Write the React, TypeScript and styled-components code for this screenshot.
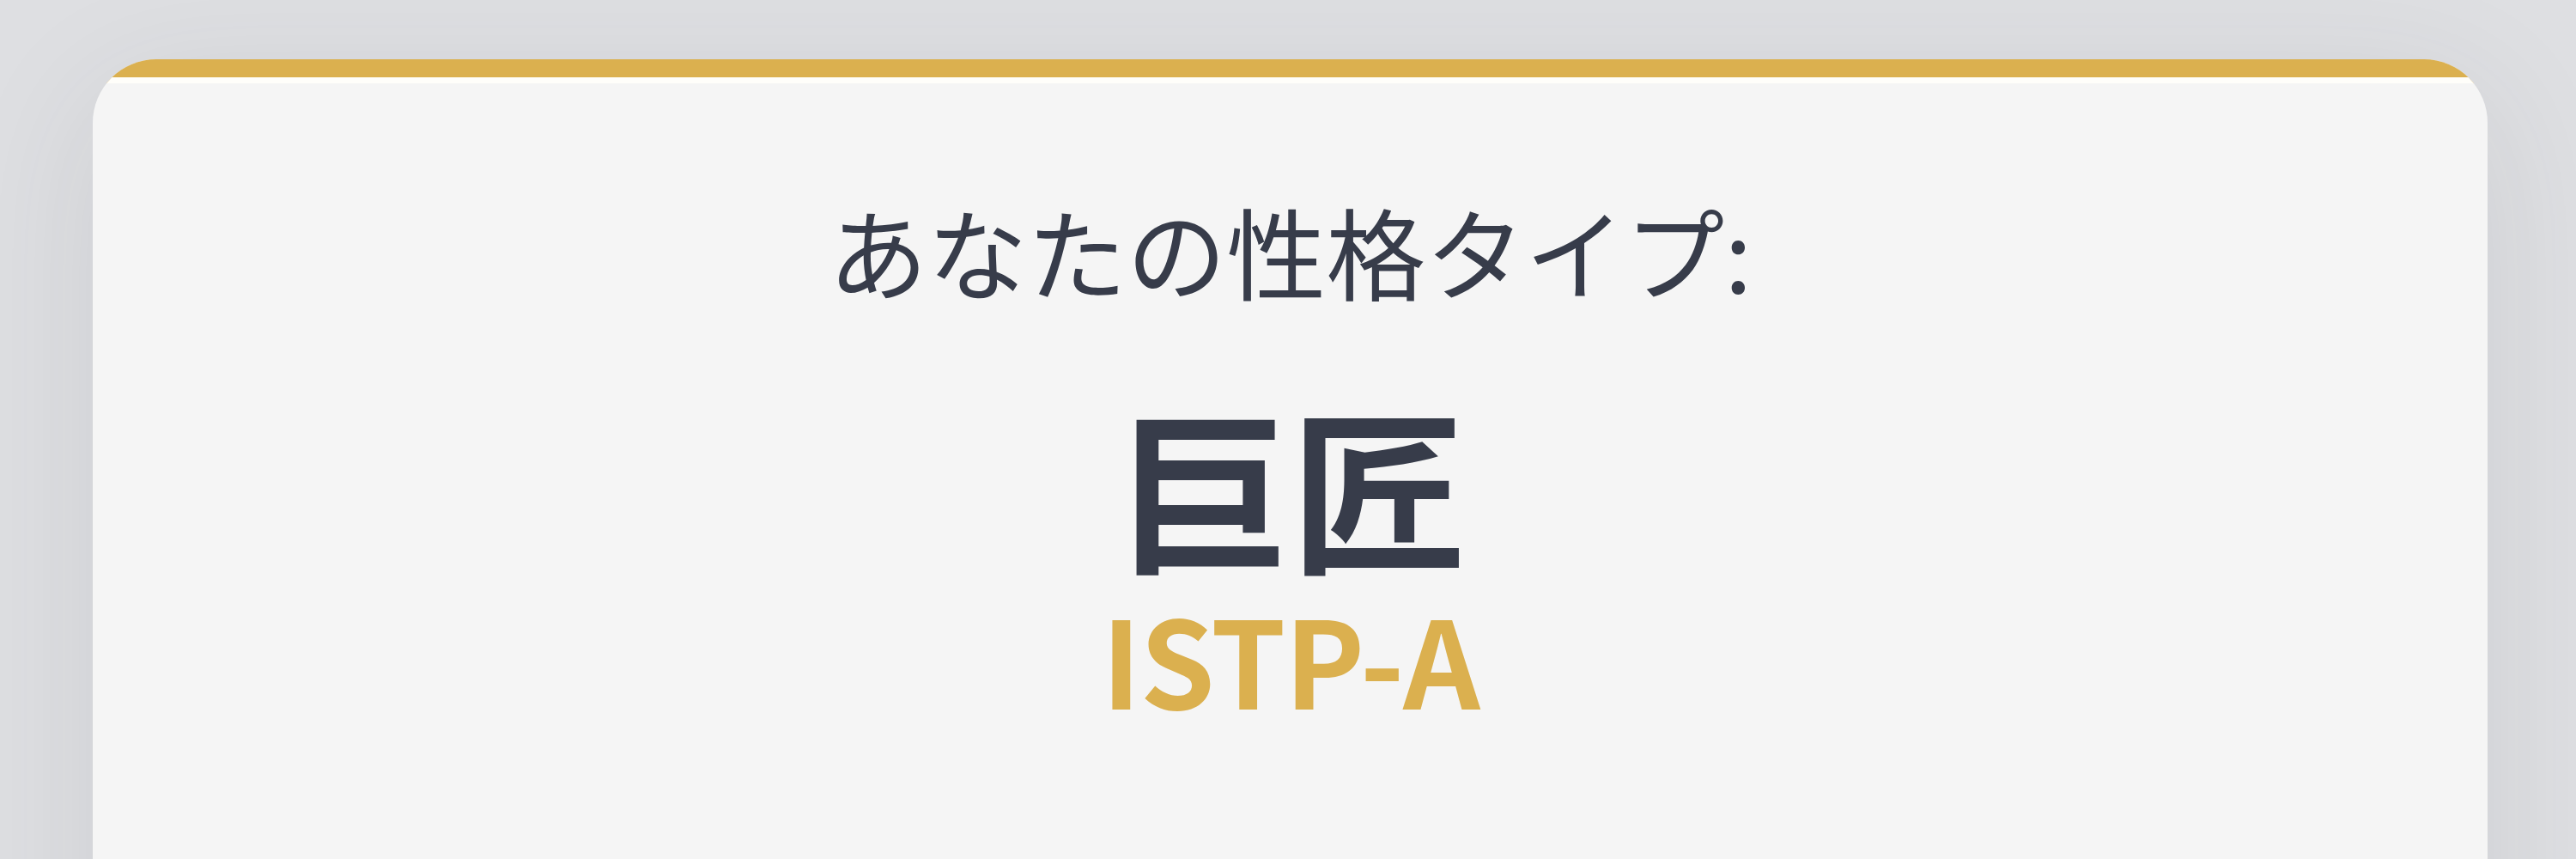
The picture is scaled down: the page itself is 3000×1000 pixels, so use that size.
import React from 'react';
import styled, { createGlobalStyle } from 'styled-components';

const GlobalStyle = createGlobalStyle`
  body {
    margin: 0;
    background: #dedfe2;
    font-family: 'Noto Sans CJK JP', sans-serif;
  }
`;

const Page = styled.div`
  box-sizing: border-box;
  height: 1000px;
  padding: 69px 103px 0 108px;
  overflow: hidden;
`;

const Card = styled.section`
  height: 1100px;
  overflow: hidden;
  border-radius: 74px;
  background: #f5f5f5;
  box-shadow: 0 40px 160px rgba(56, 62, 72, 0.1);
  text-align: center;
`;

const CardAccent = styled.div`
  height: 21px;
  background: #dbb04f;
  border-bottom: 7px solid #fffefa;
`;

const CardHead = styled.header`
  display: flex;
  flex-direction: column;
  align-items: center;
  padding-top: 108px;
  color: #373c4a;
`;

const Label = styled.p`
  margin: 0;
  font-size: 116px;
  line-height: 170px;
`;

const TypeName = styled.h1`
  margin: 68px 0 2px;
  font-size: 204px;
  font-weight: 700;
  line-height: 240px;
`;

const TypeCode = styled.div`
  color: #dbb04f;
  font-size: 140px;
  font-weight: 700;
  letter-spacing: -1.5px;
  line-height: 160px;
`;

const App: React.FC = () => (
  <Page>
    <GlobalStyle />
    <Card>
      <CardAccent />
      <CardHead>
        <Label>あなたの性格タイプ:</Label>
        <TypeName>巨匠</TypeName>
        <TypeCode>ISTP-A</TypeCode>
      </CardHead>
    </Card>
  </Page>
);

export default App;
